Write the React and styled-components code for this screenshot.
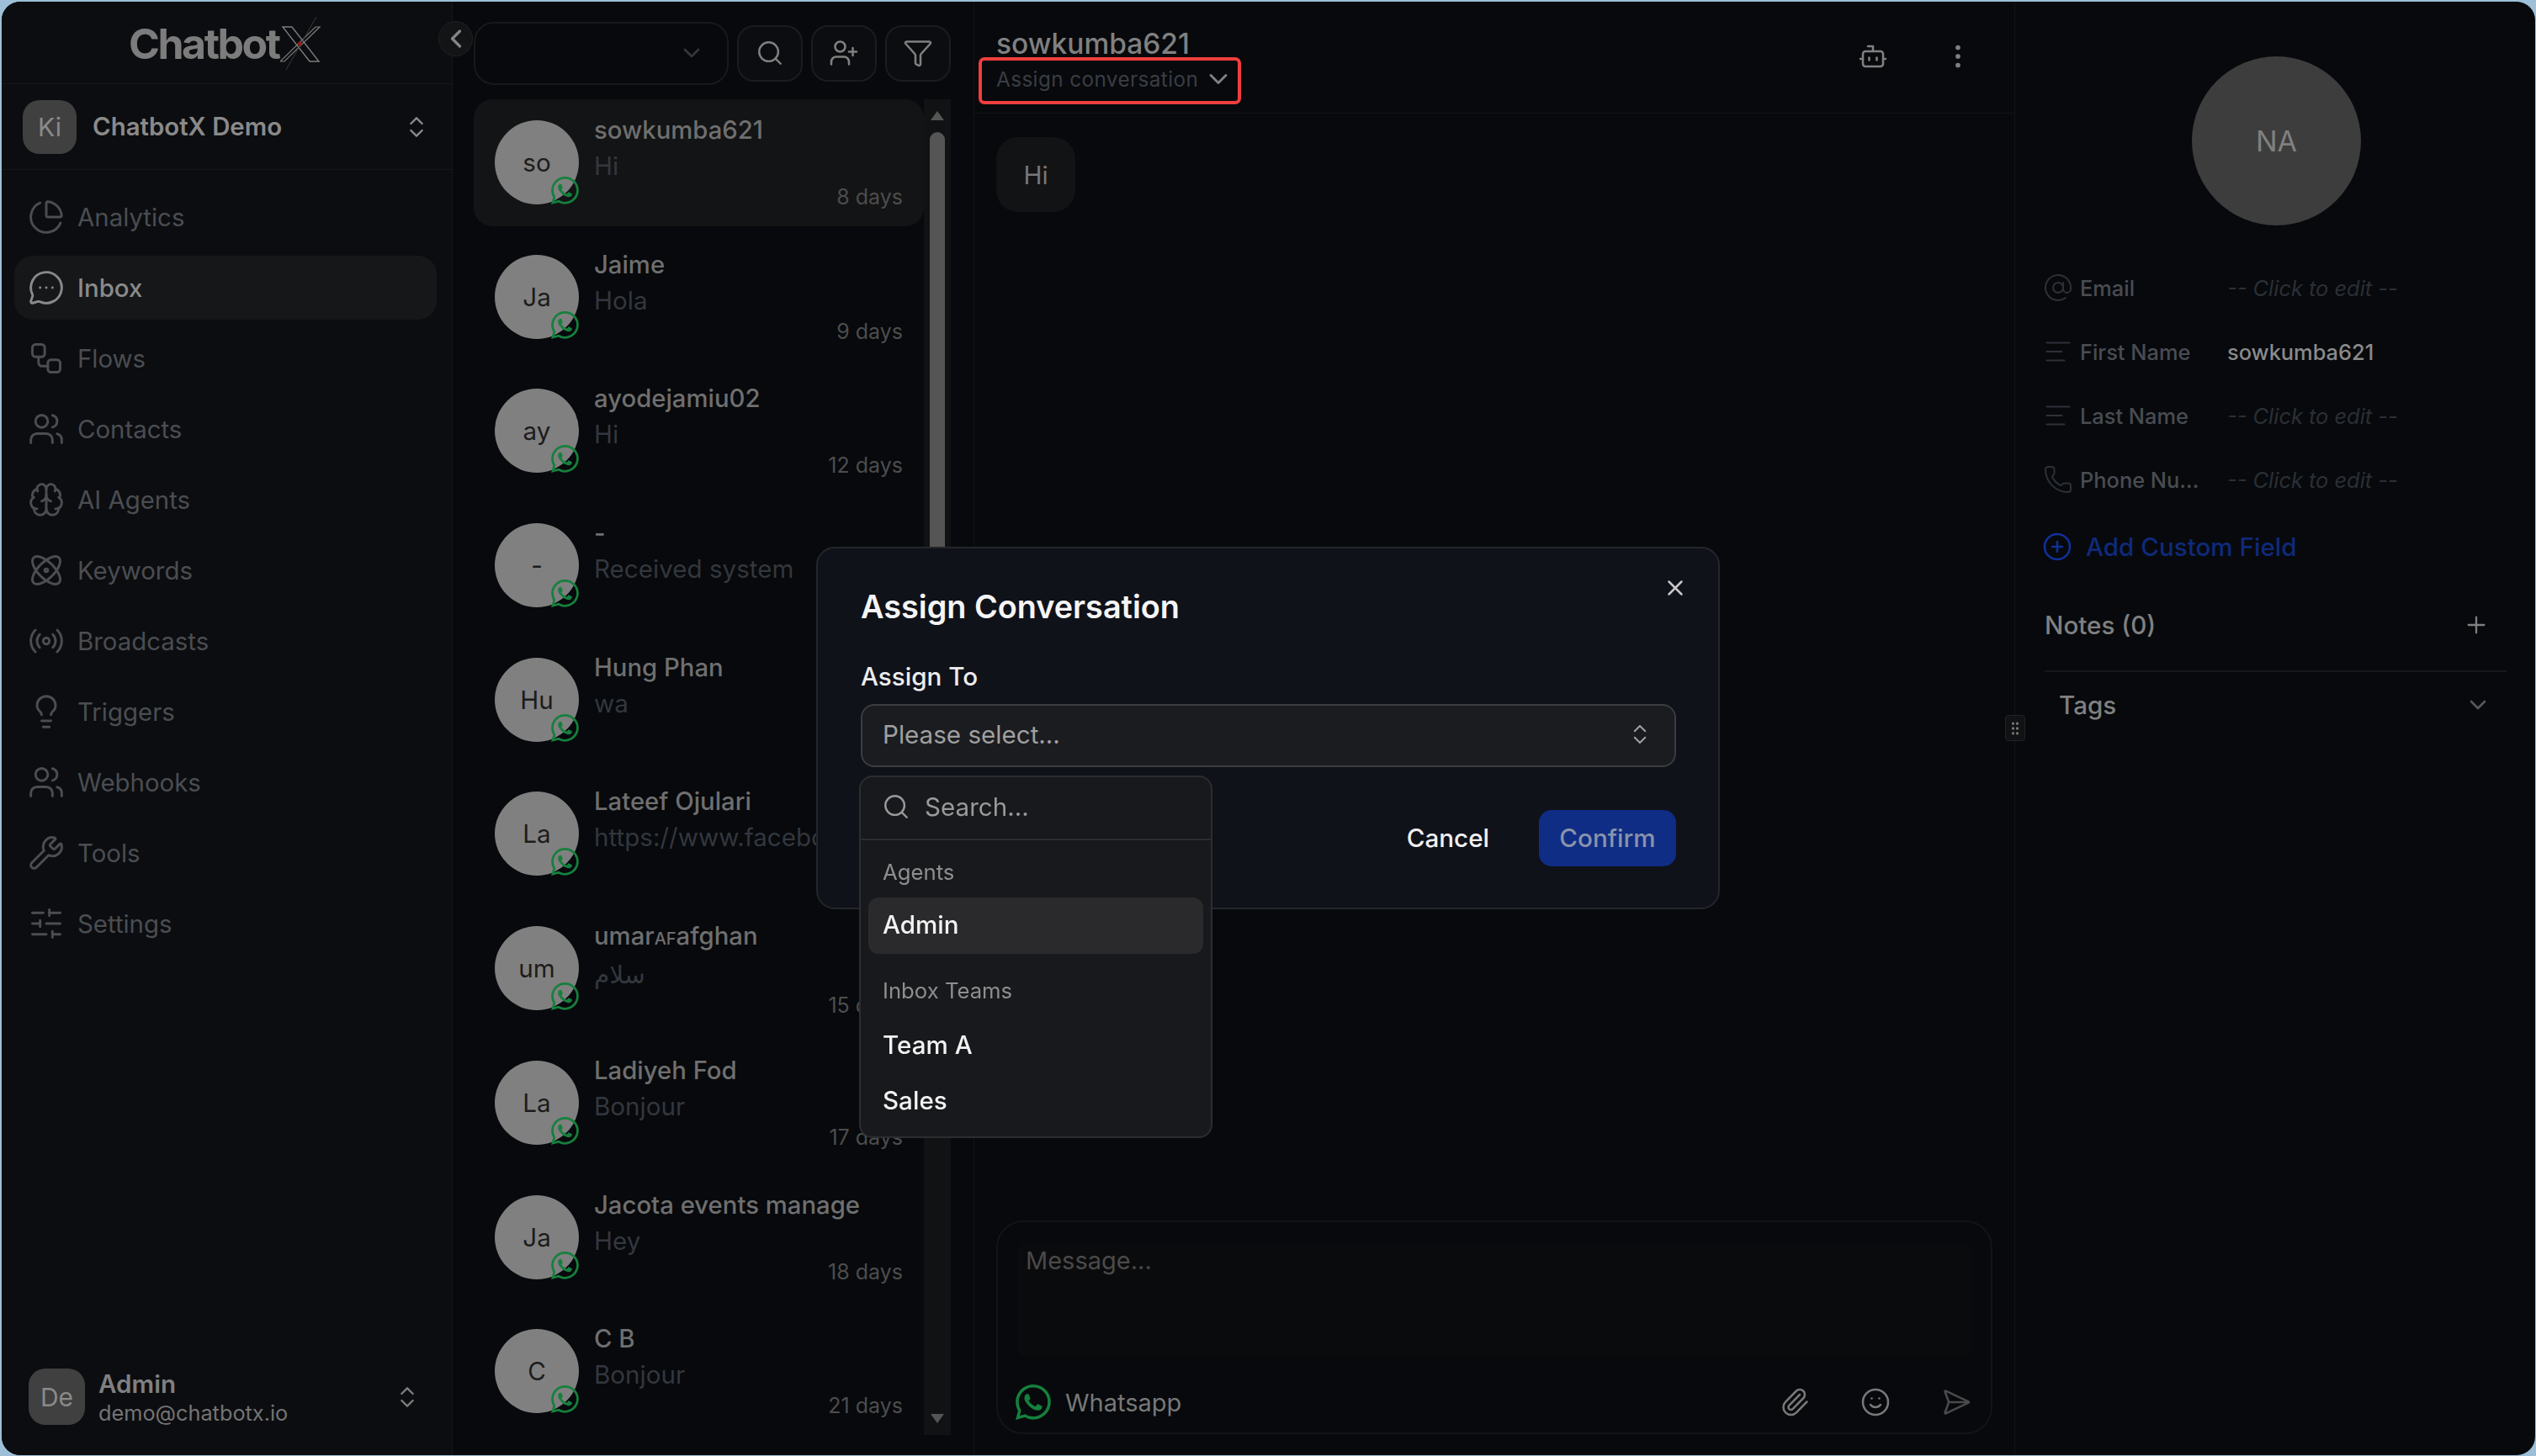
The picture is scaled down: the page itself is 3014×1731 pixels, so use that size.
import React from 'react';
import styled, { createGlobalStyle } from 'styled-components';
import {
    AlignLeft, AtSign, Bot, Brain, ChartPie, ChevronDown, ChevronLeft, ChevronsUpDown, CirclePlus,
    EllipsisVertical, Funnel, GripVertical, Lightbulb, MessageCircleMore, Paperclip, Phone, Plus, Radio,
    Atom, Search, SendHorizontal, SlidersHorizontal, Smile, UserPlus, Users, Workflow, Wrench, X
} from 'lucide-react';
import { BsWhatsapp } from 'react-icons/bs';

const GlobalStyle = createGlobalStyle`
    html, body {
        margin: 0;
        height: 100%;
        background: #9dc0d8;
    }
    * {
        box-sizing: border-box;
    }
    body {
        font-family: Inter, "DejaVu Sans", sans-serif;
        font-size: 29.6px;
        overflow: hidden;
    }
`;

const Screen = styled.div`
    height: 1731px;
    padding: 2px 1px 1px 2px;
`;

const Shell = styled.div`
    position: relative;
    display: flex;
    height: 100%;
    background: #07090c;
    border-radius: 22px;
    overflow: hidden;
`;

const Sidebar = styled.aside`
    width: 536px;
    flex: none;
    display: flex;
    flex-direction: column;
    background: #0c0d10;
    border-right: 1px solid #16181c;
`;

const LogoRow = styled.div`
    height: 98px;
    flex: none;
    display: flex;
    align-items: center;
    padding: 2px 0 0 151px;
    border-bottom: 1px solid #16181c;
`;

const LogoText = styled.span`
    font-size: 50px;
    font-weight: 700;
    letter-spacing: -2.5px;
    color: #7c7c7c;
    line-height: 1;
`;

const TeamRow = styled.div`
    height: 102px;
    flex: none;
    display: flex;
    align-items: center;
    padding: 0 26px 0 25px;
    border-bottom: 1px solid #16181c;
    color: #8a8a8a;
`;

const SquareAvatar = styled.div`
    width: ${props => props.$size}px;
    height: ${props => props.$size}px;
    flex: none;
    display: flex;
    align-items: center;
    justify-content: center;
    border-radius: 20px;
    background: #404040;
    color: #8a8a8a;
    font-size: 30px;
`;

const TeamName = styled.span`
    flex: 1;
    margin-left: 19px;
    font-weight: 600;
    font-size: 29.4px;
    color: #8a8a8a;
`;

const Nav = styled.nav`
    display: flex;
    flex-direction: column;
    gap: 8px;
    padding: 18px 18px 0 15px;
`;

const NavItem = styled.div`
    height: 76px;
    display: flex;
    align-items: center;
    gap: 15px;
    padding-left: 16px;
    border-radius: 22px;
    background: ${props => (props.$active ? '#161718' : 'transparent')};
    color: ${props => (props.$active ? '#8a8a8a' : '#4a4d52')};
    font-weight: ${props => (props.$active ? 500 : 400)};
    font-size: 29.4px;
`;

const UserRow = styled.div`
    margin-top: auto;
    display: flex;
    align-items: center;
    padding: 0 37px 33px 32px;
    color: #7c7c7c;
`;

const UserText = styled.div`
    flex: 1;
    margin-left: 16px;
    padding-top: 3px;
    display: flex;
    flex-direction: column;
`;

const UserName = styled.span`
    font-weight: 600;
    font-size: 29.6px;
    line-height: 36px;
    color: #808080;
`;

const UserMail = styled.span`
    font-size: 25.3px;
    line-height: 34px;
    color: #747474;
`;

const ListColumn = styled.section`
    width: 620px;
    flex: none;
    display: flex;
    flex-direction: column;
    border-right: 1px solid #121418;
`;

const ListHeader = styled.div`
    height: 116px;
    flex: none;
    display: flex;
    align-items: center;
    gap: 10px;
    padding: 6px 0 0 25px;
`;

const InboxSelect = styled.div`
    width: 303px;
    height: 75px;
    display: flex;
    align-items: center;
    justify-content: flex-end;
    padding-right: 26px;
    border: 2px solid #17191c;
    border-radius: 24px;
    color: #33363a;
`;

const IconButton = styled.div`
    width: 78px;
    height: 67px;
    display: flex;
    align-items: center;
    justify-content: center;
    border: 2px solid #1a1c1f;
    border-radius: 20px;
    background: #0c0d10;
    color: #808080;
`;

const CollapseButton = styled.div`
    position: absolute;
    left: 519px;
    top: 23px;
    width: 41px;
    height: 42px;
    display: flex;
    align-items: center;
    justify-content: center;
    border-radius: 50%;
    border: 1px solid #1e2022;
    background: #131416;
    color: #858585;
`;

const ListBody = styled.div`
    height: 1588px;
    display: flex;
    padding-left: 25px;
`;

const Items = styled.div`
    width: 535px;
    flex: none;
    display: flex;
    flex-direction: column;
    gap: 8.7px;
    overflow: hidden;
`;

const ConversationItem = styled.div`
    height: 151px;
    flex: none;
    display: flex;
    padding: 25px 25px 0;
    gap: 18px;
    border-radius: 22px;
    background: ${props => (props.$active ? '#131415' : 'transparent')};
`;

const RoundAvatar = styled.div`
    position: relative;
    width: 100px;
    height: 100px;
    flex: none;
    display: flex;
    align-items: center;
    justify-content: center;
    border-radius: 50%;
    background: #808080;
    color: #1c1c1c;
    font-size: 29.6px;
`;

const ChannelBadge = styled.span`
    position: absolute;
    right: 0;
    bottom: 0;
    display: flex;
    color: #15803d;
`;

const ItemText = styled.div`
    flex: 1;
    min-width: 0;
    margin-top: -9px;
    display: flex;
    flex-direction: column;
`;

const ItemName = styled.div`
    font-size: 29.3px;
    font-weight: 500;
    line-height: 42px;
    color: #6f6f6f;
    white-space: nowrap;
`;

const FlagLetters = styled.span`
    font-size: 20px;
`;

const ItemPreview = styled.div`
    font-size: 29.6px;
    line-height: 42px;
    color: #33373e;
    white-space: nowrap;
    overflow: hidden;
`;

const ItemDate = styled.div`
    margin-top: -1px;
    font-size: 25px;
    line-height: 34px;
    color: #4d4d4d;
    text-align: right;
`;

const ScrollTrack = styled.div`
    width: 32px;
    flex: none;
    display: flex;
    flex-direction: column;
    align-items: center;
    background: #111214;
`;

const ScrollArrow = styled.div`
    width: 0;
    height: 0;
    flex: none;
    margin: ${props => (props.$down ? 'auto 0 14px' : '14px 0 0')};
    border-left: 8px solid transparent;
    border-right: 8px solid transparent;
    border-top: ${props => (props.$down ? '11px solid #555' : 'none')};
    border-bottom: ${props => (props.$down ? 'none' : '11px solid #555')};
`;

const ScrollThumb = styled.div`
    width: 18px;
    height: 640px;
    margin-top: 14px;
    border-radius: 9px;
    background: #555;
`;

const ChatColumn = styled.main`
    flex: 1;
    min-width: 0;
    display: flex;
    flex-direction: column;
    border-right: 1px solid #121418;
`;

const ChatHeader = styled.header`
    height: 133px;
    flex: none;
    display: flex;
    justify-content: space-between;
    padding: 35px 49px 0 26px;
    border-bottom: 1px solid #121418;
`;

const ChatTitle = styled.div`
    font-size: 33.5px;
    font-weight: 500;
    line-height: 30px;
    color: #808080;
`;

const AssignBox = styled.div`
    width: 312px;
    height: 56px;
    margin-left: -21px;
    margin-top: 1px;
    display: flex;
    align-items: center;
    gap: 6px;
    padding: 0 0 4px 17px;
    border: 4px solid #ef3e3e;
    border-radius: 7px;
    font-size: 24.3px;
    letter-spacing: 0.4px;
    color: #3a3d44;
    white-space: nowrap;
`;

const HeaderChevron = styled.span`
    display: flex;
    color: #808080;
`;

const HeaderActions = styled.div`
    display: flex;
    align-items: flex-start;
    gap: 65px;
    padding-top: 12px;
    color: #808080;
`;

const ChatBody = styled.div`
    flex: 1;
    padding: 28px 26px;
`;

const Bubble = styled.div`
    width: 94px;
    height: 89px;
    display: flex;
    align-items: center;
    justify-content: center;
    border-radius: 26px;
    background: #121315;
    color: #777;
`;

const Composer = styled.div`
    margin: 0 26px 25px;
    height: 254px;
    flex: none;
    padding: 26px 23px 0;
    border: 2px solid #12141a;
    border-radius: 32px;
`;

const MessageField = styled.div`
    height: 134px;
    padding: 2px 10px;
    border-radius: 10px;
    background: #0a0b0c;
    color: #4a4a4a;
    font-size: 29px;
    line-height: 36px;
`;

const ComposerFooter = styled.div`
    margin-top: 33px;
    height: 42px;
    display: flex;
    align-items: center;
    color: #787878;
`;

const ChannelName = styled.span`
    flex: 1;
    margin-left: 17px;
    font-size: 29px;
    color: #787878;
`;

const ComposerIcons = styled.div`
    display: flex;
    gap: 60px;
`;

const WhatsappMark = styled.span`
    display: flex;
    margin-left: -2px;
    color: #15803d;
`;

const DetailsColumn = styled.aside`
    position: relative;
    width: 618px;
    flex: none;
    display: flex;
    flex-direction: column;
    padding: 65px 34px 0 35px;
`;

const ResizeHandle = styled.div`
    position: absolute;
    left: -12px;
    top: 848px;
    width: 24px;
    height: 31px;
    display: flex;
    align-items: center;
    justify-content: center;
    border: 1px solid #202226;
    border-radius: 4px;
    background: #111214;
    color: #777;
`;

const ProfileAvatar = styled.div`
    width: 201px;
    height: 201px;
    flex: none;
    align-self: center;
    margin-left: 2px;
    display: flex;
    align-items: center;
    justify-content: center;
    border-radius: 50%;
    background: #3d3d3d;
    color: #808080;
    font-size: 34px;
`;

const Fields = styled.div`
    margin-top: 36px;
    display: flex;
    flex-direction: column;
`;

const FieldRow = styled.div`
    height: 76px;
    display: grid;
    grid-template-columns: 42px 175px 1fr;
    align-items: center;
    font-size: 25.4px;
`;

const FieldIcon = styled.span`
    display: flex;
    margin-left: -2px;
    color: #2d3138;
`;

const FieldLabel = styled.span`
    max-width: 146px;
    font-weight: 500;
    color: #494c52;
    white-space: nowrap;
    overflow: hidden;
    text-overflow: ellipsis;
`;

const FieldValue = styled.span`
    font-weight: ${props => (props.$empty ? 400 : 500)};
    font-style: ${props => (props.$empty ? 'italic' : 'normal')};
    color: ${props => (props.$empty ? '#2b2f36' : '#8a8a8a')};
    white-space: nowrap;
`;

const AddField = styled.div`
    height: 84px;
    display: flex;
    align-items: center;
    gap: 16px;
    margin-left: -3px;
    font-size: 29.6px;
    font-weight: 500;
    color: #0f2a7a;
`;

const NotesRow = styled.div`
    height: 107px;
    display: flex;
    align-items: center;
    justify-content: space-between;
    padding: 0 20px 4px 0;
    border-bottom: 2px solid #15171b;
    font-weight: 500;
    color: #808080;
`;

const TagsRow = styled.div`
    height: 78px;
    display: flex;
    align-items: center;
    justify-content: space-between;
    padding: 0 18px 0 17px;
    font-weight: 500;
    color: #808080;
`;

const DimChevron = styled.span`
    display: flex;
    color: #55585c;
`;

const Overlay = styled.div`
    position: fixed;
    inset: 0;
    display: flex;
    align-items: center;
    justify-content: center;
`;

const Modal = styled.div`
    position: relative;
    width: 1074px;
    height: 431px;
    padding: 44px 50px 0 51px;
    border: 2px solid #24262c;
    border-radius: 22px;
    background: #10121a;
`;

const ModalTitle = styled.h2`
    margin: 0;
    font-size: 37.8px;
    font-weight: 600;
    line-height: 50px;
    color: #f5f5f5;
`;

const CloseButton = styled.span`
    position: absolute;
    right: 36px;
    top: 32px;
    display: flex;
    color: #c8c8c8;
`;

const FieldTitle = styled.div`
    margin-top: 40px;
    font-weight: 500;
    line-height: 36px;
    color: #ededed;
`;

const SelectBox = styled.div`
    margin-top: 15px;
    height: 75px;
    display: flex;
    align-items: center;
    justify-content: space-between;
    padding: 0 26px 3px 24px;
    border: 2px solid #3a3c40;
    border-radius: 16px;
    background: #1b1c20;
    color: #a0a0a0;
`;

const ModalFooter = styled.div`
    margin-top: 51px;
    display: flex;
    align-items: center;
    justify-content: flex-end;
    gap: 59px;
`;

const CancelButton = styled.span`
    padding-bottom: 2px;
    font-weight: 500;
    color: #f0f0f0;
`;

const ConfirmButton = styled.div`
    width: 163px;
    height: 67px;
    padding-bottom: 2px;
    display: flex;
    align-items: center;
    justify-content: center;
    border-radius: 15px;
    background: #0f2d85;
    color: #8a93ab;
    font-weight: 500;
`;

const Dropdown = styled.div`
    position: absolute;
    left: 49px;
    top: 270px;
    width: 420px;
    height: 431px;
    border: 2px solid #2c2d30;
    border-radius: 16px;
    background: #18191c;
`;

const DropdownSearch = styled.div`
    height: 75px;
    display: flex;
    align-items: center;
    gap: 17px;
    padding: 0 0 3px 25px;
    border-bottom: 2px solid #2c2d30;
    color: #9a9a9a;
`;

const DropdownGroup = styled.div`
    padding: ${props => props.$top}px 9px 0;
`;

const GroupLabel = styled.div`
    height: 38px;
    display: flex;
    align-items: center;
    margin-bottom: 12px;
    padding-left: 17px;
    font-size: 25.7px;
    color: #8e8e8e;
`;

const Option = styled.div`
    height: 66.5px;
    padding: 0 0 ${props => (props.$active ? 3 : 0)}px 17px;
    display: flex;
    align-items: center;
    border-radius: 12px;
    background: ${props => (props.$active ? '#2a2a2d' : 'transparent')};
    color: #f2f2f2;
    font-weight: 500;
`;

const navLinks = [
    { label: 'Analytics', icon: ChartPie },
    { label: 'Inbox', icon: MessageCircleMore, active: true },
    { label: 'Flows', icon: Workflow },
    { label: 'Contacts', icon: Users },
    { label: 'AI Agents', icon: Brain },
    { label: 'Keywords', icon: Atom },
    { label: 'Broadcasts', icon: Radio },
    { label: 'Triggers', icon: Lightbulb },
    { label: 'Webhooks', icon: Users },
    { label: 'Tools', icon: Wrench },
    { label: 'Settings', icon: SlidersHorizontal }
];

const conversations = [
    { name: 'sowkumba621', initials: 'so', preview: 'Hi', date: '8 days', active: true },
    { name: 'Jaime', initials: 'Ja', preview: 'Hola', date: '9 days' },
    { name: 'ayodejamiu02', initials: 'ay', preview: 'Hi', date: '12 days' },
    { name: '-', initials: '-', preview: 'Received system', date: '13 days' },
    { name: 'Hung Phan', initials: 'Hu', preview: 'wa', date: '13 days' },
    { name: 'Lateef Ojulari', initials: 'La', preview: 'https://www.facebook.com', date: '14 days' },
    { name: <>umar<FlagLetters>AF</FlagLetters>afghan</>, initials: 'um', preview: 'سلام', date: '15 days' },
    { name: 'Ladiyeh Fod', initials: 'La', preview: 'Bonjour', date: '17 days' },
    { name: 'Jacota events manage', initials: 'Ja', preview: 'Hey', date: '18 days' },
    { name: 'C B', initials: 'C', preview: 'Bonjour', date: '21 days' }
];

const fields = [
    { label: 'Email', icon: AtSign, value: '-- Click to edit --', empty: true },
    { label: 'First Name', icon: AlignLeft, value: 'sowkumba621' },
    { label: 'Last Name', icon: AlignLeft, value: '-- Click to edit --', empty: true },
    { label: 'Phone Number', icon: Phone, value: '-- Click to edit --', empty: true }
];

function LogoMark() {
    return (
        <svg width="50" height="64" viewBox="0 0 50 64" fill="none" style={{ marginLeft: 1 }}>
            <path d="M3 12h11l32 41H35z" stroke="#7c7c7c" strokeWidth="1.4" />
            <path d="M47 12h-5L0 53h5z" stroke="#7c7c7c" strokeWidth="1.2" />
            <path d="M43 0 7 63" stroke="#3c3c3c" strokeWidth="1" />
            <circle cx="23.5" cy="32" r="2.4" fill="#a01616" />
        </svg>
    );
}

function App() {
    return (
        <Screen>
            <GlobalStyle />
            <Shell>
                <Sidebar>
                    <LogoRow>
                        <LogoText>Chatbot</LogoText>
                        <LogoMark />
                    </LogoRow>
                    <TeamRow>
                        <SquareAvatar $size={64}>Ki</SquareAvatar>
                        <TeamName>ChatbotX Demo</TeamName>
                        <ChevronsUpDown size={32} strokeWidth={1.8} />
                    </TeamRow>
                    <Nav>
                        {navLinks.map(link => (
                            <NavItem key={link.label} $active={link.active}>
                                <link.icon size={44} strokeWidth={1.6} />
                                {link.label}
                            </NavItem>
                        ))}
                    </Nav>
                    <UserRow>
                        <SquareAvatar $size={67}>De</SquareAvatar>
                        <UserText>
                            <UserName>Admin</UserName>
                            <UserMail>demo@chatbotx.io</UserMail>
                        </UserText>
                        <ChevronsUpDown size={32} strokeWidth={1.8} />
                    </UserRow>
                </Sidebar>
                <CollapseButton>
                    <ChevronLeft size={36} strokeWidth={2.2} />
                </CollapseButton>
                <ListColumn>
                    <ListHeader>
                        <InboxSelect>
                            <ChevronDown size={32} />
                        </InboxSelect>
                        <IconButton>
                            <Search size={34} strokeWidth={1.7} />
                        </IconButton>
                        <IconButton>
                            <UserPlus size={36} strokeWidth={1.7} />
                        </IconButton>
                        <IconButton>
                            <Funnel size={36} strokeWidth={1.7} />
                        </IconButton>
                    </ListHeader>
                    <ListBody>
                        <Items>
                            {conversations.map(item => (
                                <ConversationItem key={item.initials + item.date} $active={item.active}>
                                    <RoundAvatar>
                                        {item.initials}
                                        <ChannelBadge>
                                            <BsWhatsapp size={33} />
                                        </ChannelBadge>
                                    </RoundAvatar>
                                    <ItemText>
                                        <ItemName>{item.name}</ItemName>
                                        <ItemPreview>{item.preview}</ItemPreview>
                                        <ItemDate>{item.date}</ItemDate>
                                    </ItemText>
                                </ConversationItem>
                            ))}
                        </Items>
                        <ScrollTrack>
                            <ScrollArrow />
                            <ScrollThumb />
                            <ScrollArrow $down />
                        </ScrollTrack>
                    </ListBody>
                </ListColumn>
                <ChatColumn>
                    <ChatHeader>
                        <div>
                            <ChatTitle>sowkumba621</ChatTitle>
                            <AssignBox>
                                Assign conversation
                                <HeaderChevron>
                                    <ChevronDown size={36} strokeWidth={2} />
                                </HeaderChevron>
                            </AssignBox>
                        </div>
                        <HeaderActions>
                            <Bot size={36} strokeWidth={1.7} />
                            <EllipsisVertical size={36} strokeWidth={1.8} />
                        </HeaderActions>
                    </ChatHeader>
                    <ChatBody>
                        <Bubble>Hi</Bubble>
                    </ChatBody>
                    <Composer>
                        <MessageField>Message...</MessageField>
                        <ComposerFooter>
                            <WhatsappMark>
                                <BsWhatsapp size={42} />
                            </WhatsappMark>
                            <ChannelName>Whatsapp</ChannelName>
                            <ComposerIcons>
                                <Paperclip size={36} strokeWidth={1.7} />
                                <Smile size={36} strokeWidth={1.7} />
                                <SendHorizontal size={36} strokeWidth={1.7} color="#4a4a4a" />
                            </ComposerIcons>
                        </ComposerFooter>
                    </Composer>
                </ChatColumn>
                <DetailsColumn>
                    <ResizeHandle>
                        <GripVertical size={20} />
                    </ResizeHandle>
                    <ProfileAvatar>NA</ProfileAvatar>
                    <Fields>
                        {fields.map(field => (
                            <FieldRow key={field.label}>
                                <FieldIcon>
                                    <field.icon size={36} strokeWidth={1.3} />
                                </FieldIcon>
                                <FieldLabel>{field.label}</FieldLabel>
                                <FieldValue $empty={field.empty}>{field.value}</FieldValue>
                            </FieldRow>
                        ))}
                    </Fields>
                    <AddField>
                        <CirclePlus size={36} strokeWidth={1.7} color="#10309a" />
                        Add Custom Field
                    </AddField>
                    <NotesRow>
                        Notes (0)
                        <Plus size={32} strokeWidth={1.7} />
                    </NotesRow>
                    <TagsRow>
                        Tags
                        <DimChevron>
                            <ChevronDown size={32} />
                        </DimChevron>
                    </TagsRow>
                </DetailsColumn>
            </Shell>
            <Overlay>
                <Modal>
                    <CloseButton>
                        <X size={30} strokeWidth={2} />
                    </CloseButton>
                    <ModalTitle>Assign Conversation</ModalTitle>
                    <FieldTitle>Assign To</FieldTitle>
                    <SelectBox>
                        Please select...
                        <ChevronsUpDown size={30} strokeWidth={1.6} />
                    </SelectBox>
                    <ModalFooter>
                        <CancelButton>Cancel</CancelButton>
                        <ConfirmButton>Confirm</ConfirmButton>
                    </ModalFooter>
                    <Dropdown>
                        <DropdownSearch>
                            <Search size={34} strokeWidth={1.7} />
                            Search...
                        </DropdownSearch>
                        <DropdownGroup $top={18}>
                            <GroupLabel>Agents</GroupLabel>
                            <Option $active>Admin</Option>
                        </DropdownGroup>
                        <DropdownGroup $top={25}>
                            <GroupLabel>Inbox Teams</GroupLabel>
                            <Option>Team A</Option>
                            <Option>Sales</Option>
                        </DropdownGroup>
                    </Dropdown>
                </Modal>
            </Overlay>
        </Screen>
    );
}

export default App;
